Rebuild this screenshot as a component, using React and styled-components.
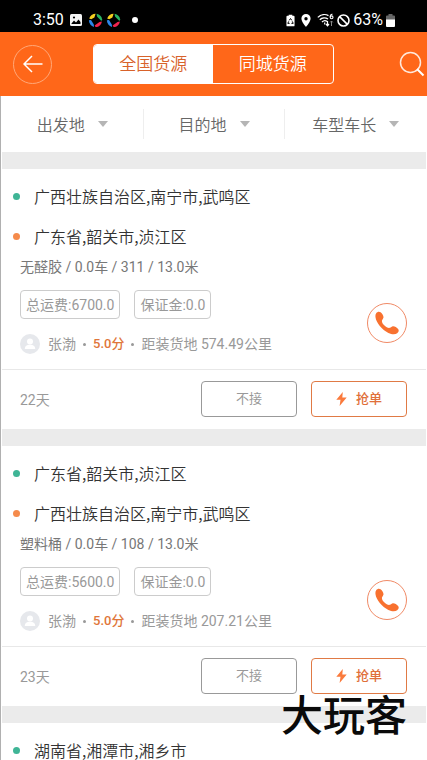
import React from 'react'
import styled, { createGlobalStyle } from 'styled-components';

const loads = [
    {
        id: 1,
        from: '广西壮族自治区,南宁市,武鸣区',
        to: '广东省,韶关市,浈江区',
        details: '无醛胶 / 0.0车 / 311 / 13.0米',
        freight: '6700.0',
        deposit: '0.0',
        owner: '张渤',
        score: '5.0分',
        distance: '574.49公里',
        age: '22天'
    },
    {
        id: 2,
        from: '广东省,韶关市,浈江区',
        to: '广西壮族自治区,南宁市,武鸣区',
        details: '塑料桶 / 0.0车 / 108 / 13.0米',
        freight: '5600.0',
        deposit: '0.0',
        owner: '张渤',
        score: '5.0分',
        distance: '207.21公里',
        age: '23天'
    },
    {
        id: 3,
        from: '湖南省,湘潭市,湘乡市'
    }
];

function Pinwheel() {
    return (
        <svg width="15" height="15" viewBox="0 0 15 15" aria-hidden="true">
            <path d="M1.200 5.600C2.200 2.600 4.600.9 7.600.8L6.400 4.400 3.200 6.200Z" fill="#f5d020" />
            <path d="M8.600.8c3 .5 5.200 2.700 5.600 5.600L13.400 8 9 3.600Z" fill="#28b463" />
            <path d="M13.900 8.400c-.6 3.200-3 5.500-6.300 5.700L6.600 12.600 11.500 9Z" fill="#f0244f" />
            <path d="M6 13.900C3 13 .9 10.600.9 7.200L3 7 5.800 11.400Z" fill="#2a86ea" />
        </svg>
    )
}

function StatusBar() {
    return (
        <StatusBarStyled>
            <span className="time">3:50</span>
            <svg width="12" height="12" viewBox="0 0 12 12" aria-hidden="true">
                <rect width="12" height="12" rx="1.500" fill="#f4f4f4" />
                <path d="M1.500 9.500 4 6.500 6 8.500 8.500 5.500 10.500 8V10h-9Z" fill="#000" />
                <circle cx="4" cy="3.500" r="1.100" fill="#000" />
            </svg>
            <div className="apps">
                <Pinwheel />
                <Pinwheel />
            </div>
            <i className="dot" />
            <div className="system">
                <div className="badges">
                    <svg width="9" height="13" viewBox="0 0 10 13" aria-hidden="true">
                        <path d="M3 0h4v1.300h1.500q1 0 1 1V12q0 1-1 1h-7q-1 0-1-1V2.300q0-1 1-1H3Z" fill="#fff" />
                        <path d="M3.600 6.300 5 4.300l1.400 2M7 7.500l1 2.200H6M4 9.700H2l1-2.200" fill="none" stroke="#000" strokeWidth="1.100" />
                    </svg>
                    <svg width="10" height="13" viewBox="0 0 10 13" aria-hidden="true">
                        <path fillRule="evenodd" d="M5 0a4.600 4.600 0 0 1 4.600 4.600C9.600 8 5 13 5 13S.4 8 .4 4.600A4.600 4.600 0 0 1 5 0Zm0 3a1.700 1.700 0 1 0 0 3.400A1.700 1.700 0 0 0 5 3Z" fill="#fff" />
                    </svg>
                    <svg width="17" height="14" viewBox="0 0 17 14" aria-hidden="true">
                        <path d="M.8 4.400C4 1.200 8.500 1 11.500 2.600M2.800 6.800C5 4.600 8.500 4.400 11 6M5 9c1.600-1.500 3.800-1.500 5.200-.4" fill="none" stroke="#fff" strokeWidth="1.300" />
                        <path d="M7.700 9.500v2M10.500 8v4.500M9 11l1.500 1.800L12 11" fill="none" stroke="#fff" strokeWidth="1.200" />
                        <path d="M15.500 1.200C13.800 1 13 2.600 13.200 4.200" fill="none" stroke="#fff" strokeWidth="1.100" />
                        <circle cx="14.600" cy="4.300" r="1.400" fill="none" stroke="#fff" strokeWidth="1.100" />
                        <path d="M14.500 13V8M13.200 9.400 14.500 8l1.300 1.400" fill="none" stroke="#888" />
                    </svg>
                </div>
                <svg width="13" height="13" viewBox="0 0 13 13" aria-hidden="true">
                    <circle cx="6.500" cy="6.500" r="5.500" fill="none" stroke="#fff" strokeWidth="1.600" />
                    <path d="m2.600 2.600 7.800 7.800" stroke="#fff" strokeWidth="1.600" />
                </svg>
                <span>63%</span>
                <svg width="9" height="13" viewBox="0 0 9 13" aria-hidden="true">
                    <path d="M2.500 0h4v1.500H8q1 0 1 1V6H0V2.500q0-1 1-1h1.500Z" fill="#666" />
                    <path d="M0 5.500h9V12q0 1-1 1H1q-1 0-1-1Z" fill="#fff" />
                </svg>
            </div>
        </StatusBarStyled>
    )
}

function LoadCard({ load }) {
    return (
        <CardStyled>
            <div className="info">
                <Place $color="#3fb596">{load.from}</Place>
                {load.to && (
                    <>
                        <Place $color="#f58b4c">{load.to}</Place>
                        <p className="details">{load.details}</p>
                        <div className="summary">
                            <div>
                                <div className="tags">
                                    <Tag>总运费:{load.freight}</Tag>
                                    <Tag>保证金:{load.deposit}</Tag>
                                </div>
                                <div className="owner">
                                    <svg width="20" height="20" viewBox="0 0 20 20" aria-hidden="true">
                                        <circle cx="10" cy="10" r="10" fill="#e6e8ec" />
                                        <circle cx="10" cy="7.500" r="3" fill="#fff" />
                                        <path d="M4.800 15c0-3 2.200-4.200 5.200-4.200s5.200 1.200 5.200 4.200Z" fill="#fff" />
                                    </svg>
                                    <span>{load.owner}</span>
                                    <i />
                                    <b>{load.score}</b>
                                    <i />
                                    <span>距装货地 {load.distance}</span>
                                </div>
                            </div>
                            <CallButton type="button" aria-label="电话">
                                <svg width="24" height="24" viewBox="0 0 24 24" aria-hidden="true">
                                    <path d="M1.200 2.200C2.300.7 4.200.2 5.600 1.300c1.600 1.300 2.700 3 2.900 4.700.2 1.400-1.200 2.200-1.500 3.600-.3 1.600.8 3.200 2.500 4.800 1.800 1.700 3.600 2.900 5.400 2.400 1.200-.3 1.900-1.700 3.300-1.500 1.700.2 3.600 1.200 4.900 2.700 1.100 1.300.6 3.100-.9 4.200-2 1.500-5.300 1.300-8.800-.3C7 18.700 1.200 11.800.5 6.200.3 4.600.4 3.300 1.200 2.200Z" fill="#f8712f" />
                                </svg>
                            </CallButton>
                        </div>
                    </>
                )}
            </div>
            {load.age && (
                <div className="actions">
                    <span className="age">{load.age}</span>
                    <ActionButton type="button">不接</ActionButton>
                    <ActionButton type="button" $primary>
                        <svg width="11" height="14" viewBox="0 0 11 14" aria-hidden="true">
                            <path d="M6.800 0 .3 7.800h4.200L3.600 14l7.100-8.600H6.300Z" fill="#fa7a3c" />
                        </svg>
                        抢单
                    </ActionButton>
                </div>
            )}
        </CardStyled>
    )
}

function App() {
    return (
        <Screen>
            <GlobalStyle />
            <StatusBar />
            <Header>
                <BackButton type="button" aria-label="返回">
                    <svg width="20" height="18" viewBox="0 0 20 18" aria-hidden="true">
                        <path d="M19.500 9H1M9 1 1 9l8 8" fill="none" stroke="#fff" strokeWidth="1.500" />
                    </svg>
                </BackButton>
                <Tabs>
                    <Tab type="button" $active>全国货源</Tab>
                    <Tab type="button">同城货源</Tab>
                </Tabs>
                <SearchButton type="button" aria-label="搜索">
                    <svg width="26" height="26" viewBox="0 0 26 26" aria-hidden="true">
                        <circle cx="11.500" cy="11.500" r="10" fill="none" stroke="#ffe9dc" strokeWidth="1.500" />
                        <path d="m18 18 6.500 6.500" stroke="#fff" strokeWidth="2" />
                    </svg>
                </SearchButton>
            </Header>
            <Content>
                <Filters>
                    <Filter type="button">出发地</Filter>
                    <Filter type="button">目的地</Filter>
                    <Filter type="button">车型车长</Filter>
                </Filters>
                {loads.map((load) => <LoadCard key={load.id} load={load} />)}
            </Content>
            <Watermark>大玩客</Watermark>
        </Screen>
    )
}

const GlobalStyle = createGlobalStyle`
    *{
        box-sizing: border-box;
        margin: 0;
        padding: 0;
    }

    body{
        background-color: #fff;
        font-family: Roboto, "Noto Sans CJK SC", sans-serif;
    }

    button{
        font-family: inherit;
        border: none;
        background: none;
        cursor: pointer;
    }

    svg{
        display: block;
        flex-shrink: 0;
    }
`;

const Screen = styled.div`
    position: relative;
    display: flex;
    flex-direction: column;
    height: 100vh;
    overflow: hidden;
`;

const StatusBarStyled = styled.div`
    display: flex;
    align-items: center;
    flex-shrink: 0;
    height: 32px;
    padding: 8px 32px 0 33px;
    background-color: #000;
    color: #fff;
    font-size: 16px;
    line-height: 24px;

    .time{
        width: 37px;
    }

    .apps{
        display: flex;
        gap: 3px;
        margin-left: 6px;
    }

    .dot{
        width: 6px;
        height: 6px;
        margin-left: 11px;
        border-radius: 50%;
        background-color: #fff;
    }

    .system{
        display: flex;
        align-items: center;
        margin-left: auto;
        gap: 3px;
    }

    .badges{
        display: flex;
        align-items: center;
        gap: 6px;
    }
`;

const Header = styled.header`
    display: flex;
    align-items: center;
    justify-content: space-between;
    flex-shrink: 0;
    height: 64px;
    padding: 0 2px 0 13px;
    background-color: #ff6719;
`;

const BackButton = styled.button`
    display: flex;
    align-items: center;
    justify-content: center;
    width: 39px;
    height: 39px;
    border: 1px solid #ffa878 !important;
    border-radius: 50%;
`;

const Tabs = styled.div`
    display: flex;
    width: 241px;
    height: 40px;
    margin-right: 25px;
    border: 1px solid #fff;
    border-radius: 4px;
    overflow: hidden;
`;

const Tab = styled.button`
    flex: 1;
    font-size: 17px;
    font-weight: 350;
    line-height: 38px;
    color: ${props => props.$active ? '#d8622a' : '#fff'};
    background-color: ${props => props.$active ? '#fff' : 'transparent'};
`;

const SearchButton = styled.button`
    width: 26px;
    height: 26px;
`;

const Content = styled.main`
    flex: 1;
    min-height: 0;
    overflow: hidden;
    border-left: 1px solid #b0b0b0;
    padding: 0 1px;
`;

const Filters = styled.nav`
    display: flex;
    align-items: center;
    height: 56px;
`;

const Filter = styled.button`
    display: flex;
    align-items: center;
    justify-content: center;
    flex: 1;
    gap: 13px;
    height: 30px;
    font-size: 16px;
    font-weight: 350;
    color: #666;

    & + &{
        border-left: 1px solid #eee;
    }

    &::after{
        content: '';
        border: 5px solid transparent;
        border-top: 6px solid #b5b5b5;
        border-bottom: 0;
    }
`;

const CardStyled = styled.article`
    border-top: 17px solid #ebebeb;

    .info{
        padding: 7px 19px 13px 18px;
    }

    .details{
        padding-top: 2px;
        font-size: 14px;
        line-height: 19px;
        color: #777;
    }

    .summary{
        display: flex;
        align-items: center;
        justify-content: space-between;
        padding-top: 13px;
    }

    .tags{
        display: flex;
        gap: 14px;
    }

    .owner{
        display: flex;
        align-items: center;
        height: 24px;
        margin-top: 13px;
        font-size: 14px;
        line-height: 24px;
        color: #999;
        span:first-of-type{
            margin-left: 8px;
        }
        b{
            font-size: 13px;
            font-weight: 500;
            color: #e0763a;
        }
        i{
            width: 3px;
            height: 3px;
            margin: 0 7px;
            border-radius: 50%;
            background-color: #999;
        }
    }

    .actions{
        display: flex;
        gap: 14px;
        padding: 11px 19px 12px 18px;
        border-top: 1px solid #e8e8e8;
    }

    .age{
        flex: 1;
        font-size: 14px;
        line-height: 38px;
        height: 36px;
        color: #999;
    }
`;

const Place = styled.div`
    display: flex;
    align-items: center;
    gap: 14px;
    height: 40px;
    margin-left: -7px;
    font-family: "Noto Sans CJK SC", sans-serif;
    font-size: 16px;
    font-weight: 350;
    line-height: 20px;
    color: #333;

    &::before{
        content: '';
        width: 7px;
        height: 7px;
        border-radius: 50%;
        background-color: ${props => props.$color};
    }
`;

const Tag = styled.span`
    height: 29px;
    padding: 0 5px;
    border: 1px solid #ccc;
    border-radius: 4px;
    font-size: 14px;
    line-height: 28px;
    color: #999;
`;

const CallButton = styled.button`
    display: flex;
    align-items: center;
    justify-content: center;
    width: 40px;
    height: 40px;
    border: 1px solid #f08a66 !important;
    border-radius: 50%;
`;

const ActionButton = styled.button`
    display: flex;
    align-items: center;
    justify-content: center;
    gap: 9px;
    width: 96px;
    height: 36px;
    border: 1px solid ${props => props.$primary ? '#e07a45' : '#999'} !important;
    border-radius: 4px;
    font-size: 13px;
    font-weight: ${props => props.$primary ? 500 : 400};
    line-height: 20px;
    color: ${props => props.$primary ? '#e0703a' : '#999'};
`;

const Watermark = styled.div`
    position: absolute;
    right: 20px;
    bottom: 20px;
    font-size: 42px;
    line-height: 46px;
    font-weight: 500;
    color: #0a0a0a;
`;

export default App;
